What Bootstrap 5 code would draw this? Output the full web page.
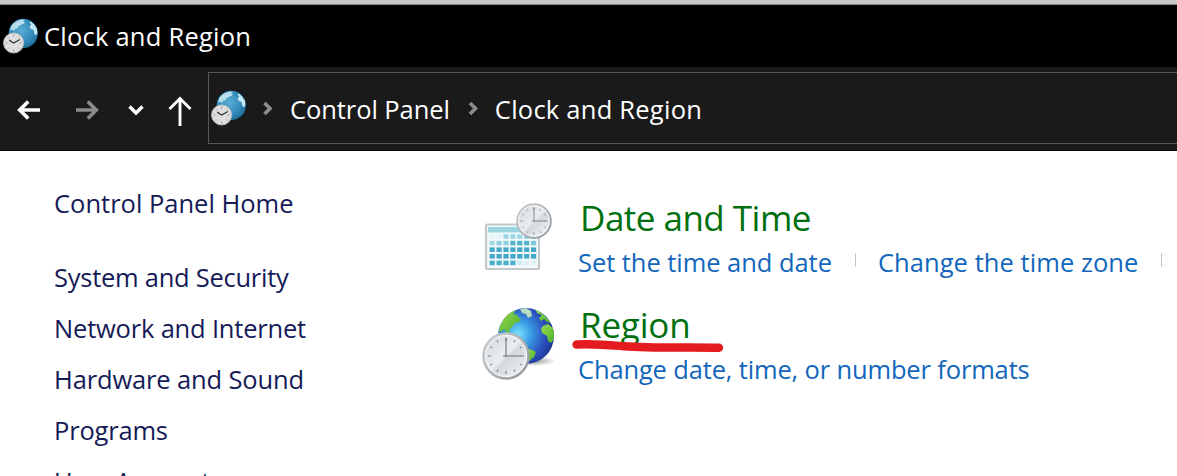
<!DOCTYPE html>
<html lang="en">
<head>
  <meta charset="UTF-8">
  <meta name="viewport" content="width=device-width, initial-scale=1.0">
  <title>Clock and Region</title>
  <link rel="stylesheet" href="https://cdn.jsdelivr.net/npm/bootstrap@5.3.0/dist/css/bootstrap.min.css">
  <style>
    body {
      height: 476px;
      font-family: "Open Sans", "Noto Sans", sans-serif;
      font-size: 25.5px;
      line-height: 36px;
      white-space: nowrap;
    }
    .window-edge { height: 5px; background: #c8c8c8; border-bottom: 1px solid #858585; }
    .title-bar { height: 62px; background: #000; padding-left: 3px; }
    .title-text { margin-left: 6px; letter-spacing: .23px; }
    .nav-bar { height: 84px; background: #1a1a1a; border-bottom: 1px solid #0c0a0a; }
    .nav-buttons { width: 208px; }
    .address-box { height: 72px; margin-top: 5px; border: 1px solid #575757; border-right: 0; padding-left: 2px; }
    .address-box span { padding-top: 2px; letter-spacing: -.08px; }
    .address-box span:last-child { letter-spacing: .24px; }
    .side-menu { width: 482px; height: 325px; padding: 34px 0 0 54px; }
    .side-menu a { color: #151b57; height: 51px; flex-shrink: 0; letter-spacing: -.19px; }
    .side-menu a:first-child { height: 74px; letter-spacing: 0; }
    .side-menu a:nth-child(2) { letter-spacing: -.26px; }
    .side-menu a:nth-child(4) { letter-spacing: -.14px; }
    .categories { padding-top: 45px; }
    .category { height: 107px; }
    .category-icon { width: 96px; padding-top: 3px; }
    .category h2 { margin: -1px 0 3px 2px; font-size: 35px; line-height: 46px; font-weight: 400; letter-spacing: -.52px; color: #00700f; }
    .category .region-title { letter-spacing: -.2px; }
    .category a { color: #1266bb; letter-spacing: -.05px; }
    .category .zone-link { letter-spacing: .06px; }
    .category .long-link { letter-spacing: -.15px; }
    .divider { width: 1px; height: 14px; margin: -4px 22px 0 23px; background: #c4c4c4; }
    .pen-mark { left: -9.5px; top: 30px; }
  </style>
</head>
<body class="bg-white overflow-hidden">
  <svg width="0" height="0" class="position-absolute">
    <defs>
      <radialGradient id="paleSea" cx=".42" cy=".4" r=".65">
        <stop offset="0" stop-color="#5aadd5"/><stop offset=".6" stop-color="#358dbd"/><stop offset="1" stop-color="#1c6a95"/>
      </radialGradient>
      <radialGradient id="deepSea" cx=".36" cy=".46" r=".66">
        <stop offset="0" stop-color="#7be0fb"/><stop offset=".35" stop-color="#3a9de6"/><stop offset=".72" stop-color="#2a52bd"/><stop offset="1" stop-color="#1d348f"/>
      </radialGradient>
      <linearGradient id="land" x2="1" y2="1">
        <stop offset="0" stop-color="#9bd94c"/><stop offset="1" stop-color="#4bb02f"/>
      </linearGradient>
      <linearGradient id="dial" x2="1" y2="1">
        <stop offset="0" stop-color="#d0d6da"/><stop offset=".48" stop-color="#eaedef"/><stop offset=".55" stop-color="#d2d8dc"/><stop offset="1" stop-color="#fafbfc"/>
      </linearGradient>
      <linearGradient id="rim" x2="1" y2="1">
        <stop offset="0" stop-color="#cdd0d2"/><stop offset="1" stop-color="#8f9599"/>
      </linearGradient>
      <radialGradient id="shade">
        <stop offset="0" stop-color="#444" stop-opacity=".6"/><stop offset="1" stop-color="#444" stop-opacity="0"/>
      </radialGradient>
      <clipPath id="globeEdge"><circle cx="44" cy="30" r="28"/></clipPath>
      <symbol id="clock" viewBox="0 0 48 48">
        <circle cx="24" cy="24" r="22.5" fill="url(#dial)" stroke="url(#rim)" stroke-width="2.4"/>
        <circle cx="24" cy="24" r="20.5" fill="none" stroke="#f7f8f9" stroke-width="1"/>
        <path d="M24 6v3M24 39v3M6 24h3M39 24h3M15 8.4l1 1.8M33 8.4l-1 1.8M8.4 15l1.8 1M39.6 15l-1.8 1M8.4 33l1.8-1M39.6 33l-1.8-1M15 39.6l1-1.8M33 39.6l-1-1.8" stroke="#7c8387" stroke-width="1.2"/>
        <path d="M24 6v19M21 24h19" stroke="#6d7478" stroke-width="1.1" fill="none"/>
      </symbol>
      <symbol id="globeClock" viewBox="0 0 34 35">
        <circle cx="19.700" cy="15" r="14.2" fill="url(#paleSea)"/>
        <path d="M8 8Q12 2 19 1.400L21.500 2.200 19.500 3.400 21.500 4.400 19.500 5.800 17.500 6.500 15 8 14 10 11.500 10.500 11 12.800 9.500 11.500 7 12Z" fill="#b9dfee"/>
        <path d="M26.500 3.200Q31 6 32.800 10L33.500 14.500 31.800 17 30.500 15 29.500 11.500 27 10.800 25.600 8.600 27.400 6.600 26.200 5Z" fill="#c5e8f4"/>
        <circle cx="10.300" cy="24.300" r="9.800" fill="#dededf" stroke="#b4b4b6" stroke-width=".9"/>
        <path d="M10.300 16.500v1.800M10.300 30.500v1.800M2.500 24.300h1.800M16.300 24.300h1.800M4.800 18.800l1 1M15.800 29.800l-1-1M4.800 29.800l1-1M15.800 18.800l-1 1" stroke="#89898c" stroke-width=".8"/>
        <path d="M6 21.500l4.300 2.800 6.200-3.400" fill="none" stroke="#353538" stroke-width="1.200"/>
      </symbol>
    </defs>
  </svg>

  <div class="window-edge"></div>
  <header class="title-bar d-flex align-items-center text-white">
    <svg width="35" height="36"><use href="#globeClock"/></svg>
    <span class="title-text">Clock and Region</span>
  </header>

  <nav class="nav-bar d-flex text-white">
    <svg class="nav-buttons flex-shrink-0" height="83" viewBox="0 0 208 83" fill="none" stroke="#fff">
      <path d="M40 43H20M28.200 34.500L19.700 43l8.500 8.500" stroke-width="3.600"/>
      <path d="M76 43h20M87.800 34.500L96.300 43l-8.500 8.500" stroke="#8a8a8a" stroke-width="3.600"/>
      <path d="M129.500 39.500l6.500 6.500 6.500-6.500" stroke-width="3.400"/>
      <path d="M180 59V32M169.500 42L180 31.500 190.500 42" stroke-width="2.900"/>
    </svg>
    <div class="address-box flex-grow-1 d-flex align-items-center">
      <svg width="35" height="36"><use href="#globeClock"/></svg>
      <svg width="44" height="20" viewBox="0 0 44 20"><path d="M18.500 5l5.500 5.500-5.500 5.500" fill="none" stroke="#8c8c8c" stroke-width="3.600"/></svg>
      <span>Control Panel</span>
      <svg width="45" height="20" viewBox="0 0 45 20"><path d="M20 5l5.500 5.500-5.500 5.500" fill="none" stroke="#8c8c8c" stroke-width="3.600"/></svg>
      <span>Clock and Region</span>
    </div>
  </nav>

  <main class="d-flex">
    <aside class="side-menu d-flex flex-column flex-shrink-0 overflow-hidden">
      <a class="text-decoration-none" href="#">Control Panel Home</a>
      <a class="text-decoration-none" href="#">System and Security</a>
      <a class="text-decoration-none" href="#">Network and Internet</a>
      <a class="text-decoration-none" href="#">Hardware and Sound</a>
      <a class="text-decoration-none" href="#">Programs</a>
      <a class="text-decoration-none" href="#">User Accounts</a>
    </aside>
    <div class="categories">
      <section class="category d-flex">
        <div class="category-icon flex-shrink-0">
          <svg class="d-block" width="76" height="76" viewBox="0 0 76 76">
            <rect x="4" y="25.500" width="53" height="44.500" rx="1.500" fill="#f4fafb" stroke="#c3c8cb" stroke-width="2.200"/>
            <rect x="6" y="28" width="49" height="5.500" fill="#9bd5e2"/>
            <g id="calendarDays"></g>
            <use href="#clock" x="34" y="4" width="36" height="36"/>
          </svg>
        </div>
        <div>
          <h2>Date and Time</h2>
          <div class="d-flex align-items-center">
            <a class="text-decoration-none" href="#">Set the time and date</a>
            <span class="divider"></span>
            <a class="text-decoration-none zone-link" href="#">Change the time zone</a>
            <span class="divider"></span>
          </div>
        </div>
      </section>
      <section class="category d-flex">
        <div class="category-icon flex-shrink-0">
          <svg class="d-block" width="76" height="76" viewBox="0 0 76 76">
            <ellipse cx="50" cy="55" rx="24" ry="5" fill="url(#shade)"/>
            <circle cx="44" cy="30" r="28" fill="url(#deepSea)"/>
            <g clip-path="url(#globeEdge)" fill="url(#land)">
              <path d="M36 2L29 5 22 12 18 20 17 26 20 25 22 23 25 27 28 28 27 24 30 21 33 17 37 16 39 13 36 11 34 8 31 9 33 5Z"/>
              <path d="M38 3l6-1 5 3 1 5-4 2-2-4-4-1Z" fill="#b9dcc0"/>
              <path d="M53 3L60 7 66 13 69 17 65 16 62 13 59 15 57 12 60 9 55 7Z"/>
              <path d="M61 20L66 18 72 23 73 32 69 37 66 35 65 30 60 27 59 23Z"/>
              <path d="M42 45L48 43 54 46 52 51 46 56 42 53Z"/>
            </g>
            <use href="#clock" x="0" y="26" width="48" height="48"/>
          </svg>
        </div>
        <div class="position-relative">
          <h2 class="region-title">Region</h2>
          <a class="text-decoration-none long-link" href="#">Change date, time, or number formats</a>
          <svg class="pen-mark position-absolute" width="160" height="24" viewBox="0 0 160 24">
            <path d="M7.500 11.500C25 10.500 40 12 55 13.200 85 15.500 120 14 150 14.800" fill="none" stroke="#e51c1f" stroke-width="8.400" stroke-linecap="round"/>
          </svg>
        </div>
      </section>
    </div>
  </main>

  <script src="https://cdn.jsdelivr.net/npm/bootstrap@5.3.0/dist/js/bootstrap.bundle.min.js"></script>
  <script>
    // one colour per week row, some days are paler
    const weeks = [
      ['#e6f5f8', '#e6f5f8', '#9fd6e3', '#9fd6e3', '#9fd6e3', '#8ccddf', '#8ccddf'],
      ['#a3dbe6', '#8fd0e0', '#8fd0e0', '#55b3cd', '#55b3cd', '#55b3cd', '#7cc6d9'],
      Array(7).fill('#43a9c8'),
      Array(7).fill('#43a9c8'),
      ['#4aafcd', '#4aafcd', '#4aafcd', '#4aafcd', '#cdebf2', '#dcf1f6', '#dcf1f6']
    ];
    document.getElementById('calendarDays').innerHTML = weeks.map((days, row) =>
      days.map((color, col) =>
        `<rect x="${7.6 + col * 6.9}" y="${35.2 + row * 6.6}" width="5.2" height="4.6" fill="${color}"/>`
      ).join('')
    ).join('');
  </script>
</body>
</html>
